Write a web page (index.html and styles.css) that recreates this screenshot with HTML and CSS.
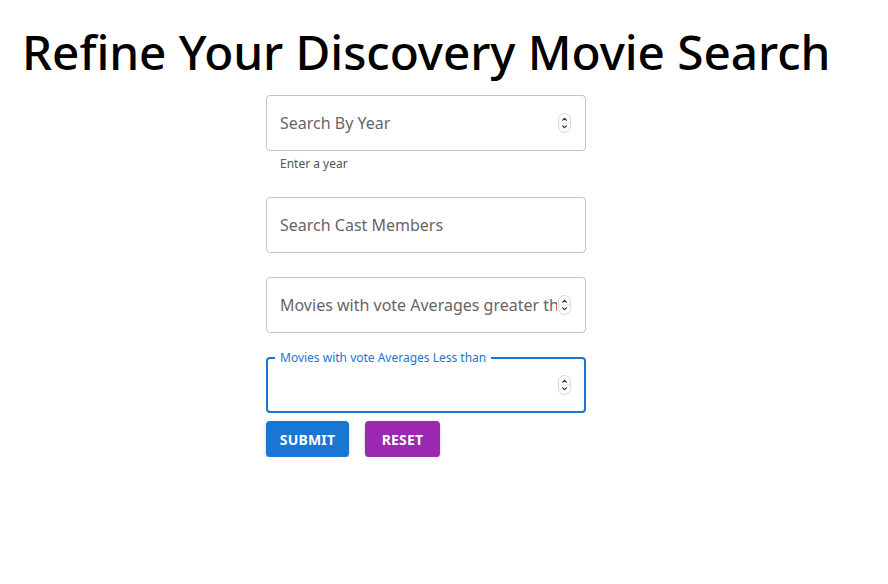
FILE: index.html
```html
<!DOCTYPE html>
<html lang="en">
<head>
<meta charset="utf-8">
<title>Refine Your Discovery Movie Search</title>
<link rel="stylesheet" href="styles.css">
</head>
<body>
<h1 class="title">Refine Your Discovery Movie Search</h1>
<form class="search">
  <div class="field">
    <div class="box">
      <input class="input" type="number" placeholder="Search By Year">
      <span class="spin"><svg width="13" height="20" viewBox="0 0 13 20"><rect x="0.5" y="0.5" width="12" height="19" rx="6" fill="#fff" stroke="#d6d6d6"/><line x1="1" y1="10" x2="12" y2="10" stroke="#e4e4e4"/><path d="M4.2 7.6 L6.5 5.3 L8.8 7.6" fill="none" stroke="#333" stroke-width="1.1"/><path d="M4.2 12.4 L6.5 14.7 L8.8 12.4" fill="none" stroke="#333" stroke-width="1.1"/></svg></span>
    </div>
    <p class="helper">Enter a year</p>
  </div>
  <div class="field">
    <div class="box">
      <input class="input" type="text" placeholder="Search Cast Members">
    </div>
  </div>
  <div class="field">
    <div class="box">
      <input class="input" type="number" placeholder="Movies with vote Averages greater than">
      <span class="spin"><svg width="13" height="20" viewBox="0 0 13 20"><rect x="0.5" y="0.5" width="12" height="19" rx="6" fill="#fff" stroke="#d6d6d6"/><line x1="1" y1="10" x2="12" y2="10" stroke="#e4e4e4"/><path d="M4.2 7.6 L6.5 5.3 L8.8 7.6" fill="none" stroke="#333" stroke-width="1.1"/><path d="M4.2 12.4 L6.5 14.7 L8.8 12.4" fill="none" stroke="#333" stroke-width="1.1"/></svg></span>
    </div>
  </div>
  <div class="field field-last">
    <div class="box box-focused">
      <fieldset class="outline"><legend class="legend">Movies with vote Averages Less than</legend></fieldset>
      <input class="input" type="number" aria-label="Movies with vote Averages Less than">
      <span class="spin"><svg width="13" height="20" viewBox="0 0 13 20"><rect x="0.5" y="0.5" width="12" height="19" rx="6" fill="#fff" stroke="#d6d6d6"/><line x1="1" y1="10" x2="12" y2="10" stroke="#e4e4e4"/><path d="M4.2 7.6 L6.5 5.3 L8.8 7.6" fill="none" stroke="#333" stroke-width="1.1"/><path d="M4.2 12.4 L6.5 14.7 L8.8 12.4" fill="none" stroke="#333" stroke-width="1.1"/></svg></span>
    </div>
  </div>
  <div class="actions">
    <button class="btn btn-submit" type="submit">Submit</button>
    <button class="btn btn-reset" type="reset">Reset</button>
  </div>
</form>
</body>
</html>
```

FILE: styles.css
```css
html, body {
  margin: 0;
  padding: 0;
  background: #fff;
}

body {
  font-family: "Noto Sans", "DejaVu Sans", sans-serif;
  color: #000;
}

.title {
  margin: 0;
  padding: 22px 0 0 22px;
  font-size: 47.7px;
  font-weight: 500;
  line-height: 60px;
  letter-spacing: -0.05px;
}

.search {
  width: 320px;
  margin: 13px 0 0 266px;
  display: flex;
  flex-direction: column;
}

.field {
  margin-bottom: 24px;
  display: flex;
  flex-direction: column;
}

.field-last {
  margin-bottom: 8px;
}

.box {
  position: relative;
  height: 56px;
  box-sizing: border-box;
  border: 1px solid rgba(0, 0, 0, 0.23);
  border-radius: 4px;
  display: flex;
  align-items: center;
  padding: 0 14px 0 13px;
  gap: 1px;
}

.box-focused {
  border-color: transparent;
}

.outline {
  position: absolute;
  inset: -6px -1px -1px -1px;
  margin: 0;
  padding: 0 8px;
  border: 2px solid #1976d2;
  border-radius: 4px;
  pointer-events: none;
}

.legend {
  padding: 0 5px;
  margin-left: -1px;
  font-size: 12px;
  line-height: 11px;
  color: #1976d2;
  white-space: nowrap;
}

.input {
  flex: 1;
  min-width: 0;
  border: none;
  outline: none;
  background: transparent;
  font-family: inherit;
  font-size: 16px;
  color: #222;
  padding: 0;
  height: 24px;
  -moz-appearance: textfield;
}

.input::-webkit-outer-spin-button,
.input::-webkit-inner-spin-button {
  -webkit-appearance: none;
  margin: 0;
}

.input::placeholder {
  color: #666;
  opacity: 1;
}

.spin {
  display: flex;
  flex: none;
}

.helper {
  margin: 4px 0 0 14px;
  font-size: 12px;
  line-height: 18px;
  color: #555;
}

.actions {
  display: flex;
  gap: 16px;
}

.btn {
  height: 36px;
  padding: 0;
  border: none;
  border-radius: 4px;
  font-family: inherit;
  font-size: 14px;
  font-weight: 700;
  letter-spacing: 0.2px;
  text-transform: uppercase;
  color: #fff;
  box-shadow: 0 3px 1px -2px rgba(0,0,0,0.2), 0 2px 2px 0 rgba(0,0,0,0.14), 0 1px 5px 0 rgba(0,0,0,0.12);
  cursor: pointer;
}

.btn-submit {
  width: 83px;
  background: #1976d2;
}

.btn-reset {
  width: 75px;
  background: #9c27b0;
}
```
